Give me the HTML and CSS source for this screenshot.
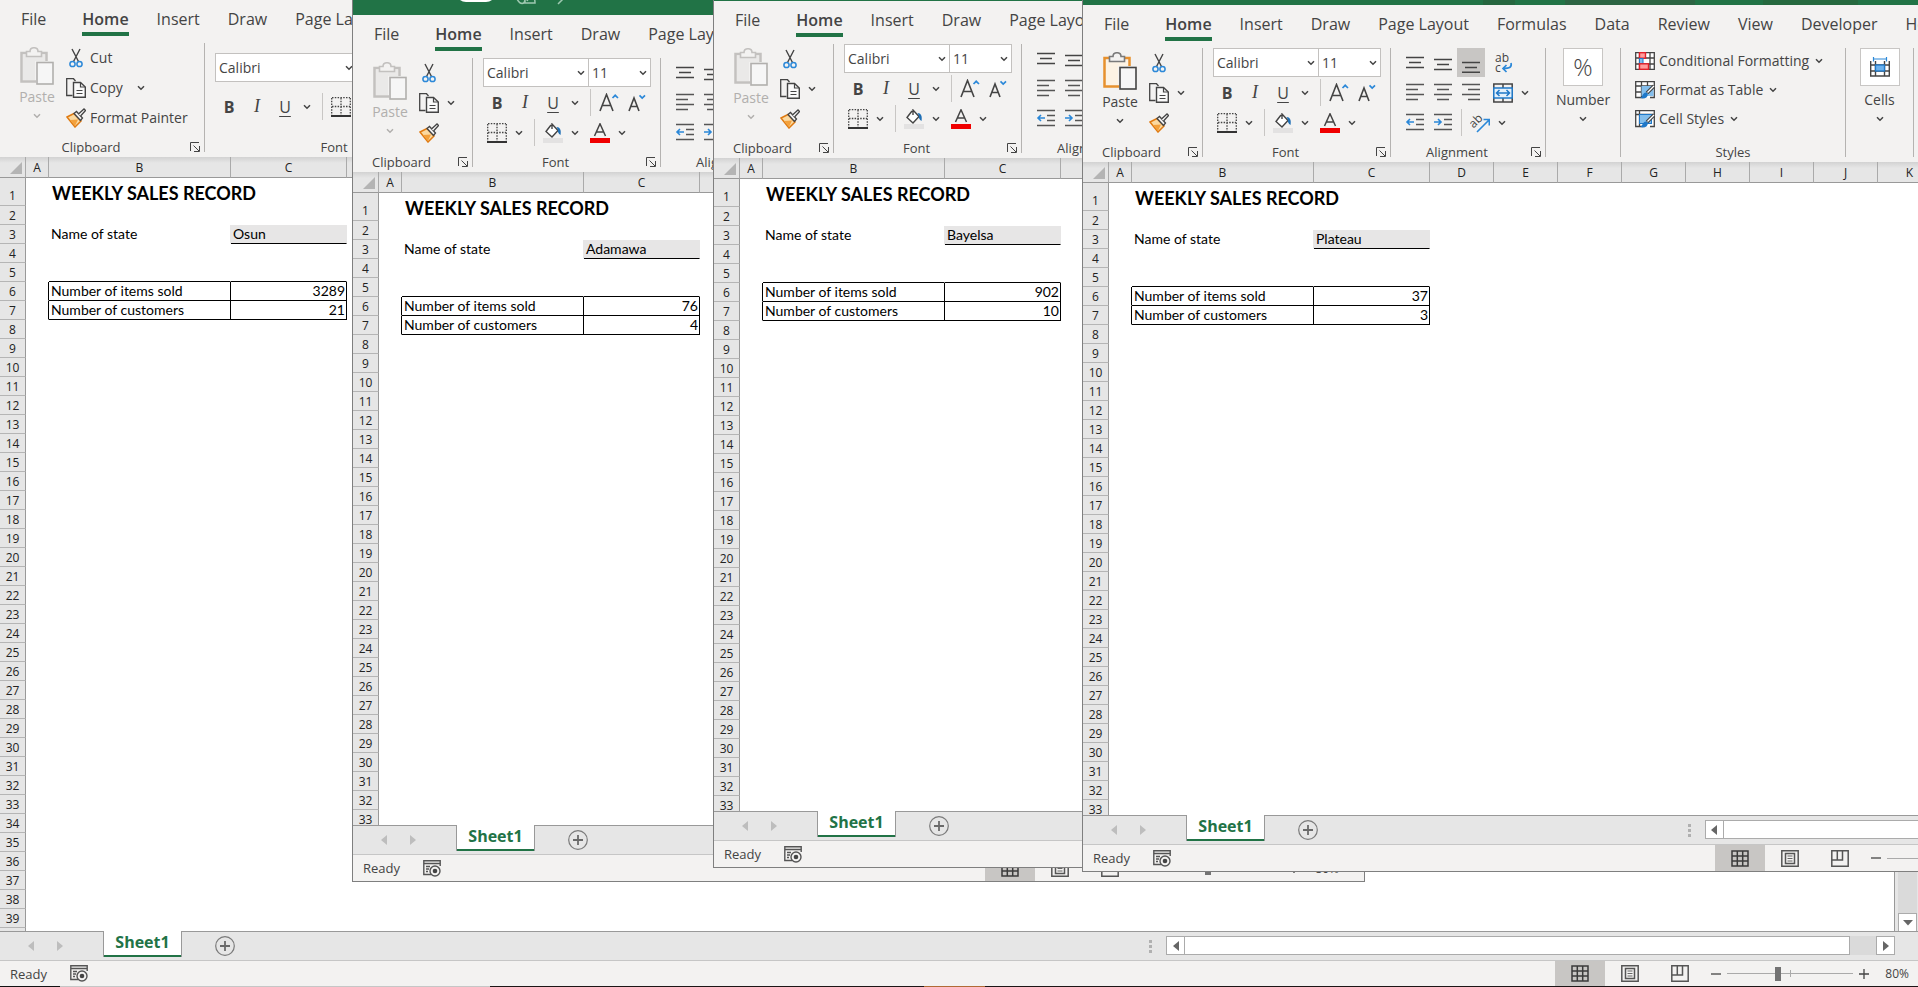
FILE: index.html
```html
<!DOCTYPE html>
<html lang="en">
<head>
    <meta charset="UTF-8">
    <title>Weekly sales record</title>
    <link rel="stylesheet" href="styles.css">
</head>
<body>
    <!-- icon set -->
    <svg class="sprite" aria-hidden="true">
        <symbol id="i-chevron" viewBox="0 0 8 6"><path d="M1 1.2L4 4.2L7 1.2" fill="none" stroke="currentColor" stroke-width="1.5"/></symbol>
        <symbol id="i-launcher" viewBox="0 0 10 10"><path d="M.5 9V.5H9M3.5 3.5L9 9M9.5 4V9.5H4" fill="none" stroke="currentColor"/></symbol>
        <symbol id="i-paste" viewBox="0 0 34 38">
            <path d="M8 6H1.500V34.500H16M20 6H26.500V14" fill="none" class="board"/>
            <path d="M3 8H25V14H15V33H3Z" class="board-page"/>
            <path d="M6.500 9.500V4.500H10C10 -.5 18 -.5 18 4.500H21.500V9.500Z" class="board-clip"/>
            <rect x="17" y="15.500" width="16" height="21.500" class="board-sheet"/>
        </symbol>
        <symbol id="i-cut" viewBox="0 0 20 20">
            <path d="M6 1L12.500 13.500M14 1L7.500 13.500" fill="none" stroke="#444" stroke-width="1.400"/>
            <circle cx="6.500" cy="16" r="2.600" fill="none" stroke="#2b88d8" stroke-width="1.500"/>
            <circle cx="13.500" cy="16" r="2.600" fill="none" stroke="#2b88d8" stroke-width="1.500"/>
        </symbol>
        <symbol id="i-copy" viewBox="0 0 20 20">
            <path d="M6.500 17.500H.7V.7H7.500L9.500 3" fill="none" stroke="#444" stroke-width="1.300"/>
            <path d="M7.500 4.500H14.500L19.300 9V19.300H7.500Z" fill="#fafafa" stroke="#444" stroke-width="1.400"/>
            <path d="M14.500 4.500V9H19M10.500 12.500H16.500M10.500 15.500H16.500" fill="none" stroke="#444" stroke-width="1.200"/>
        </symbol>
        <symbol id="i-painter" viewBox="0 0 20 20">
            <path d="M1 9L8 5.500L15 13L9 19Z" fill="#fbd9a0" stroke="#e07b12" stroke-width="1.500"/>
            <path d="M4 12L12 11.500L9 18Z" fill="#f3a13c"/>
            <path d="M8 5.500L10.500 3.500L16.500 10L14.500 12.500Z" fill="#f3f2f1" stroke="#444" stroke-width="1.300"/>
            <path d="M12.500 6L18 1L19.500 2.500L14.500 8" fill="#fff" stroke="#444" stroke-width="1.300"/>
        </symbol>
        <symbol id="i-borders" viewBox="0 0 20 20">
            <path d="M1 .7H19M.7 1V18M19.300 1V18M10 1V18M1 9.500H19" stroke="#444" stroke-width="1.300" stroke-dasharray="1.500 1.300" fill="none"/>
            <path d="M0 19H20" stroke="#333" stroke-width="2"/>
        </symbol>
        <symbol id="i-fill" viewBox="0 0 20 20">
            <path d="M8 2L3 8.500L9 14L15 7.500L9 1V6" fill="#fff" stroke="#444" stroke-width="1.400"/>
            <path d="M13.500 4C17 4 18.500 7 17.500 12C15.500 11 14.500 8.500 15 7Z" fill="#1f6fb5"/>
            <path d="M0 17.500H20" stroke="#e3e2e2" stroke-width="5"/>
        </symbol>
        <symbol id="i-fontcolor" viewBox="0 0 20 20">
            <path d="M4.500 13L10 .8L15.500 13M6.500 9H13.500" fill="none" stroke="#444" stroke-width="1.500"/>
            <path d="M0 17.500H20" stroke="#f00000" stroke-width="5"/>
        </symbol>
        <symbol id="i-grow" viewBox="0 0 20 20">
            <path d="M1 18L7.500 1.500L14 18M3.500 12.500H11.500" fill="none" stroke="#444" stroke-width="1.600"/>
            <path d="M13.500 5L16.200 2.300L19 5" fill="none" stroke="#2b88d8" stroke-width="1.700"/>
        </symbol>
        <symbol id="i-shrink" viewBox="0 0 20 20">
            <path d="M2 18L7 5L12 18M4 13.500H10" fill="none" stroke="#444" stroke-width="1.600"/>
            <path d="M12.500 2.300L15.200 5L18 2.300" fill="none" stroke="#2b88d8" stroke-width="1.700"/>
        </symbol>
        <symbol id="i-top" viewBox="0 0 20 20"><path d="M1 4.500H19M4 9.500H16M1 14.500H19" stroke="#444" stroke-width="1.400"/></symbol>
        <symbol id="i-middle" viewBox="0 0 20 20"><path d="M1 6.500H19M4 11.500H16M1 16.500H19" stroke="#444" stroke-width="1.400"/></symbol>
        <symbol id="i-bottom" viewBox="0 0 20 20"><path d="M1 9.500H19M4 14.500H16M1 19.300H19" stroke="#444" stroke-width="1.400"/></symbol>
        <symbol id="i-left" viewBox="0 0 20 20"><path d="M1 1.500H19M1 6.500H13M1 11.500H19M1 16.500H13" stroke="#555" stroke-width="1.400"/></symbol>
        <symbol id="i-center" viewBox="0 0 20 20"><path d="M1 1.500H19M4 6.500H16M1 11.500H19M4 16.500H16" stroke="#555" stroke-width="1.400"/></symbol>
        <symbol id="i-right" viewBox="0 0 20 20"><path d="M1 1.500H19M7 6.500H19M1 11.500H19M7 16.500H19" stroke="#555" stroke-width="1.400"/></symbol>
        <symbol id="i-outdent" viewBox="0 0 20 20">
            <path d="M1 1.500H19M11 6.500H19M11 11.500H19M1 16.500H19" stroke="#555" stroke-width="1.400"/>
            <path d="M9 9H2M5 6L2 9L5 12" fill="none" stroke="#2b88d8" stroke-width="1.600"/>
        </symbol>
        <symbol id="i-indent" viewBox="0 0 20 20">
            <path d="M1 1.500H19M11 6.500H19M11 11.500H19M1 16.500H19" stroke="#555" stroke-width="1.400"/>
            <path d="M1 9H8M5 6L8 9L5 12" fill="none" stroke="#2b88d8" stroke-width="1.600"/>
        </symbol>
        <symbol id="i-wrap" viewBox="0 0 20 20">
            <text x="2" y="9" class="icon-text">ab</text>
            <text x="2" y="19" class="icon-text">c</text>
            <path d="M18 10C19 14 17 15.500 10 15.500M13.500 12L10 15.500L13.500 19" fill="none" stroke="#2b88d8" stroke-width="1.700"/>
        </symbol>
        <symbol id="i-merge" viewBox="0 0 20 20">
            <path d="M.8 1H19.200V19H.8ZM10 1V5M10 15V19" fill="none" stroke="#444" stroke-width="1.500"/>
            <rect x=".8" y="5" width="18.400" height="10" fill="#e5f1fb" stroke="#1f78c8" stroke-width="1.500"/>
            <path d="M3.500 10H16.500M6.500 7L3.500 10L6.500 13M13.500 7L16.500 10L13.500 13" fill="none" stroke="#1f78c8" stroke-width="1.500"/>
        </symbol>
        <symbol id="i-orient" viewBox="0 0 20 20">
            <text x="0" y="13" class="icon-text" transform="rotate(-45 5 10)">ab</text>
            <path d="M7 19L19 7M13.500 6.500H19.300V12.500" fill="none" stroke="#2b88d8" stroke-width="1.600"/>
        </symbol>
        <symbol id="i-cond" viewBox="0 0 20 18">
            <path d="M.7.7H19.300V17.300H.7ZM1 6H19M1 12H19M4.500 1V17M15 1V17" fill="#fff" stroke="#444" stroke-width="1.300"/>
            <rect x="4.500" y=".7" width="6" height="5.500" fill="#ff9d9d" stroke="#e0202a" stroke-width="1.400"/>
            <rect x="4.500" y="6.500" width="3.500" height="5" fill="#83beec" stroke="#1f78c8"/>
            <rect x="4.500" y="11.800" width="9" height="5.500" fill="#ff9d9d" stroke="#e0202a" stroke-width="1.400"/>
        </symbol>
        <symbol id="i-table" viewBox="0 0 20 18">
            <path d="M8 16.500H.7V.7H19.300V16.500H15M1 5H19M1 11H7M6.500 1V16M12.500 1V5" fill="#fff" stroke="#444" stroke-width="1.300"/>
            <rect x="6.500" y="5" width="12" height="10" fill="#83beec"/>
            <path d="M19 5L12 12" stroke="#444" stroke-width="3.500"/>
            <path d="M19 5L12.500 11.500" stroke="#fff" stroke-width="1.300"/>
            <path d="M5 17C8 16 7 12 11 11.500C14 12 13 17 9 17.500Z" fill="#1f78c8"/>
        </symbol>
        <symbol id="i-cellstyle" viewBox="0 0 20 18">
            <path d="M8 16.500H.7V.7H19.300V16.500H15M1 4.500H19M4.500 1V16" fill="#fff" stroke="#444" stroke-width="1.300"/>
            <rect x="4.500" y="4.500" width="12" height="9" fill="#83beec" stroke="#1f78c8"/>
            <path d="M19 5L12 12" stroke="#444" stroke-width="3.500"/>
            <path d="M19 5L12.500 11.500" stroke="#fff" stroke-width="1.300"/>
            <path d="M5 17C8 16 7 12 11 11.500C14 12 13 17 9 17.500Z" fill="#1f78c8"/>
        </symbol>
        <symbol id="i-cells" viewBox="0 0 20 20">
            <path d="M.7 4V19H19.300V4M1 8H19M1 14H19M5.500 4V19M14.500 4V19" fill="none" stroke="#444" stroke-width="1.400"/>
            <rect x="5.500" y="8" width="9" height="6" fill="#6cb2ee" stroke="#1f78c8" stroke-width="1.300"/>
            <path d="M3.500 0V4.500M16.500 0V4.500M3.500 2H16.500" stroke="#2b88d8" stroke-width="1.200"/>
        </symbol>
        <symbol id="i-macro" viewBox="0 0 18 17">
            <path d="M8 14.500H.8V.8H17.200V6M1 3.500H17M3 6.500H7M3 9H6M3 11.500H5" fill="none" stroke="#555" stroke-width="1.400"/>
            <circle cx="12" cy="11" r="5" fill="#f3f2f1" stroke="#555" stroke-width="1.400"/>
            <circle cx="12" cy="11" r="2.300" fill="#444"/>
        </symbol>
        <symbol id="i-plus-circle" viewBox="0 0 20 20">
            <circle cx="10" cy="10" r="9.300" fill="none" stroke="#7a7a7a" stroke-width="1.200"/>
            <path d="M5 10H15M10 5V15" stroke="#6a6a6a" stroke-width="1.800"/>
        </symbol>
        <symbol id="i-normal" viewBox="0 0 18 17"><path d="M1 1H17V16H1ZM1 6H17M1 11H17M6.300 1V16M11.700 1V16" fill="none" stroke="#3b3b3b" stroke-width="1.500"/></symbol>
        <symbol id="i-pagelayout" viewBox="0 0 18 17">
            <path d="M.8.8H17.200V16.200H.8ZM4.500 3.500H13.500V13.500H4.500Z" fill="none" stroke="#555" stroke-width="1.500"/>
            <path d="M6.500 6H11.500M6.500 8.500H11.500M6.500 11H11.500" stroke="#666"/>
        </symbol>
        <symbol id="i-pagebreak" viewBox="0 0 18 17"><path d="M.8.8H17.200V16.200H.8ZM1 10H11.500V1M6.300 1V10" fill="none" stroke="#555" stroke-width="1.500"/></symbol>
    </svg>

    <main class="desktop" id="desktop"></main>
    <div class="taskbar"></div>

    <template id="window-template">
        <section class="window">
            <header class="titlebar">
                <span class="autosave"></span>
                <svg class="title-icon" viewBox="0 0 20 20"><path d="M1 14C4 20 9 20 9 14V18H19C19 10 14 10 11 16" fill="none" stroke="#9fc9b1" stroke-width="1.500"/></svg>
                <svg class="title-icon" viewBox="0 0 20 20"><path d="M2 19L9 12" fill="none" stroke="#9fc9b1" stroke-width="1.500"/></svg>
            </header>
            <nav class="tabs">
                <button class="tab file">File</button>
                <button class="tab active">Home</button>
                <button class="tab">Insert</button>
                <button class="tab">Draw</button>
                <button class="tab">Page Layout</button>
                <button class="tab">Formulas</button>
                <button class="tab">Data</button>
                <button class="tab">Review</button>
                <button class="tab">View</button>
                <button class="tab">Developer</button>
                <button class="tab">Help</button>
            </nav>
            <div class="ribbon">
                <div class="group clipboard">
                    <div class="group-body">
                        <button class="big paste">
                            <svg class="icon-paste"><use href="#i-paste"/></svg>
                            <span>Paste</span>
                            <svg class="chevron"><use href="#i-chevron"/></svg>
                        </button>
                        <div class="rows">
                            <button class="command" aria-label="Cut"><svg class="icon"><use href="#i-cut"/></svg><span class="wide">Cut</span></button>
                            <button class="command" aria-label="Copy"><svg class="icon"><use href="#i-copy"/></svg><span class="wide">Copy</span><svg class="chevron"><use href="#i-chevron"/></svg></button>
                            <button class="command" aria-label="Format Painter"><svg class="icon"><use href="#i-painter"/></svg><span class="wide">Format Painter</span></button>
                        </div>
                    </div>
                    <div class="group-label"><span>Clipboard</span><button class="launcher" aria-label="Clipboard settings"><svg><use href="#i-launcher"/></svg></button></div>
                </div>
                <div class="group font">
                    <div class="group-body">
                        <div class="row selects">
                            <label class="combo font-name"><select aria-label="Font"><option>Calibri</option></select><svg class="chevron"><use href="#i-chevron"/></svg></label>
                            <label class="combo font-size"><select aria-label="Font size"><option>11</option></select><svg class="chevron"><use href="#i-chevron"/></svg></label>
                        </div>
                        <div class="row">
                            <button class="tool"><b>B</b></button>
                            <button class="tool italic">I</button>
                            <button class="tool underline">U</button>
                            <button class="drop" aria-label="Underline style"><svg class="chevron"><use href="#i-chevron"/></svg></button>
                            <i class="sep"></i>
                            <button class="tool grow" aria-label="Increase font size"><svg class="icon"><use href="#i-grow"/></svg></button>
                            <button class="tool grow" aria-label="Decrease font size"><svg class="icon"><use href="#i-shrink"/></svg></button>
                        </div>
                        <div class="row">
                            <button class="tool" aria-label="Borders"><svg class="icon"><use href="#i-borders"/></svg></button>
                            <button class="drop" aria-label="Border style"><svg class="chevron"><use href="#i-chevron"/></svg></button>
                            <i class="sep"></i>
                            <button class="tool" aria-label="Fill color"><svg class="icon"><use href="#i-fill"/></svg></button>
                            <button class="drop" aria-label="Choose fill color"><svg class="chevron"><use href="#i-chevron"/></svg></button>
                            <button class="tool font-color" aria-label="Font color"><svg class="icon"><use href="#i-fontcolor"/></svg></button>
                            <button class="drop" aria-label="Choose font color"><svg class="chevron"><use href="#i-chevron"/></svg></button>
                        </div>
                    </div>
                    <div class="group-label"><span>Font</span><button class="launcher" aria-label="Font settings"><svg><use href="#i-launcher"/></svg></button></div>
                </div>
                <div class="group alignment">
                    <div class="group-body">
                        <div class="row">
                            <button class="tool" aria-label="Top align"><svg class="icon"><use href="#i-top"/></svg></button>
                            <button class="tool" aria-label="Middle align"><svg class="icon"><use href="#i-middle"/></svg></button>
                            <button class="tool on" aria-label="Bottom align"><svg class="icon"><use href="#i-bottom"/></svg></button>
                            <button class="tool after" aria-label="Wrap text"><svg class="icon"><use href="#i-wrap"/></svg></button>
                        </div>
                        <div class="row">
                            <button class="tool" aria-label="Align left"><svg class="icon"><use href="#i-left"/></svg></button>
                            <button class="tool" aria-label="Center"><svg class="icon"><use href="#i-center"/></svg></button>
                            <button class="tool" aria-label="Align right"><svg class="icon"><use href="#i-right"/></svg></button>
                            <button class="tool after" aria-label="Merge and center"><svg class="icon"><use href="#i-merge"/></svg></button>
                            <button class="drop" aria-label="Merge options"><svg class="chevron"><use href="#i-chevron"/></svg></button>
                        </div>
                        <div class="row">
                            <button class="tool" aria-label="Decrease indent"><svg class="icon"><use href="#i-outdent"/></svg></button>
                            <button class="tool" aria-label="Increase indent"><svg class="icon"><use href="#i-indent"/></svg></button>
                            <i class="sep tight"></i>
                            <button class="tool" aria-label="Orientation"><svg class="icon"><use href="#i-orient"/></svg></button>
                            <button class="drop" aria-label="Orientation options"><svg class="chevron"><use href="#i-chevron"/></svg></button>
                        </div>
                    </div>
                    <div class="group-label"><span>Alignment</span><button class="launcher" aria-label="Alignment settings"><svg><use href="#i-launcher"/></svg></button></div>
                </div>
                <div class="group number">
                    <button class="big"><span class="tile">%</span><span>Number</span><svg class="chevron"><use href="#i-chevron"/></svg></button>
                </div>
                <div class="group styles">
                    <div class="group-body">
                        <button class="command"><svg class="icon"><use href="#i-cond"/></svg><span>Conditional Formatting</span><svg class="chevron"><use href="#i-chevron"/></svg></button>
                        <button class="command"><svg class="icon"><use href="#i-table"/></svg><span>Format as Table</span><svg class="chevron"><use href="#i-chevron"/></svg></button>
                        <button class="command"><svg class="icon"><use href="#i-cellstyle"/></svg><span>Cell Styles</span><svg class="chevron"><use href="#i-chevron"/></svg></button>
                    </div>
                    <div class="group-label"><span>Styles</span></div>
                </div>
                <div class="group cells">
                    <button class="big"><span class="tile"><svg class="icon"><use href="#i-cells"/></svg></span><span>Cells</span><svg class="chevron"><use href="#i-chevron"/></svg></button>
                </div>
            </div>
            <div class="workarea">
                <div class="sheet"><table><thead></thead><tbody></tbody></table></div>
                <div class="vscroll"><div class="track"></div><button class="scroll-btn" aria-label="Scroll down"><svg viewBox="0 0 10 6"><path d="M0 0H10L5 5.500Z" fill="#666"/></svg></button></div>
            </div>
            <div class="sheetbar">
                <div class="sheet-tabs">
                    <button class="nav-arrow" aria-label="Previous sheet"><svg viewBox="0 0 6 10"><path d="M6 0V10L0 5Z" fill="#bdbdbd"/></svg></button>
                    <button class="nav-arrow" aria-label="Next sheet"><svg viewBox="0 0 6 10"><path d="M0 0V10L6 5Z" fill="#bdbdbd"/></svg></button>
                    <button class="sheet-tab">Sheet1</button>
                    <button class="add" aria-label="New sheet"><svg><use href="#i-plus-circle"/></svg></button>
                    <svg class="dots" viewBox="0 0 3 13"><path d="M0 0H3V3H0ZM0 5H3V8H0ZM0 10H3V13H0Z" fill="#b0b0b0"/></svg>
                </div>
                <div class="hscroll">
                    <button class="scroll-btn" aria-label="Scroll left"><svg viewBox="0 0 6 10"><path d="M6 0V10L0 5Z" fill="#666"/></svg></button>
                    <div class="thumb"></div>
                    <div class="gap"></div>
                    <button class="scroll-btn" aria-label="Scroll right"><svg viewBox="0 0 6 10"><path d="M0 0V10L6 5Z" fill="#666"/></svg></button>
                </div>
            </div>
            <footer class="status">
                <span class="ready">Ready</span>
                <svg class="macro"><use href="#i-macro"/></svg>
                <div class="views">
                    <button class="view on" aria-label="Normal"><svg><use href="#i-normal"/></svg></button>
                    <button class="view" aria-label="Page layout"><svg><use href="#i-pagelayout"/></svg></button>
                    <button class="view" aria-label="Page break preview"><svg><use href="#i-pagebreak"/></svg></button>
                </div>
                <button class="zoom-btn" aria-label="Zoom out"><svg viewBox="0 0 10 10"><path d="M0 5H10" stroke="#444" stroke-width="1.300"/></svg></button>
                <input class="zoom" type="range" min="0" max="200" value="80" aria-label="Zoom">
                <button class="zoom-btn" aria-label="Zoom in"><svg viewBox="0 0 10 10"><path d="M0 5H10M5 0V10" stroke="#444" stroke-width="1.300"/></svg></button>
                <span class="percent">80%</span>
            </footer>
        </section>
    </template>

    <script src="script.js"></script>
</body>
</html>
```

FILE: styles.css
```css
* {
    box-sizing: border-box;
}

body {
    margin: 0;
    height: 100vh;
    display: flex;
    flex-direction: column;
    overflow: hidden;
    font-family: "Open Sans", "Noto Sans", sans-serif;
    font-size: 14px;
    color: #444;
}

button {
    border: 0;
    padding: 0;
    background: none;
    font: inherit;
    color: inherit;
    display: flex;
    align-items: center;
    justify-content: center;
    white-space: nowrap;
}

svg {
    display: block;
    flex: none;
}

.sprite {
    position: absolute;
    width: 0;
    height: 0;
}

.desktop {
    position: relative;
    flex: 1;
    overflow: hidden;
}

.taskbar {
    height: 1px;
    background: linear-gradient(to right, #111 60px, #c6c6c6 60px 490px, #1c1516 490px 924px, #b06a35 924px 985px, #1c1516 985px);
}

/* windows */
.window {
    position: absolute;
    display: flex;
    flex-direction: column;
    width: 1013px;
    height: calc(100vh - 80px);
    border: 1px solid #7f7f7f;
    border-top: 0;
    background: #e6e6e6;
    overflow: hidden;
}

.osun {
    left: 0;
    top: -40px;
    width: 100%;
    height: calc(100vh + 39px);
    border: 0;
}

.adamawa { left: 352px; top: -25px; }
.bayelsa { left: 713px; top: -39px; }
.plateau { left: 1082px; top: -35px; }

.titlebar {
    flex: none;
    height: 40px;
    background: #217346;
    display: flex;
    align-items: flex-start;
    gap: 20px;
    padding: 7px 0 0 103px;
}

.plateau .titlebar {
    background: linear-gradient(to right, #217346 400px, #26663f 400px 432px, #217346 432px 482px, #2c6443 482px 612px, #217346 612px 680px, #26693f 680px 775px, #217346 775px);
}

.autosave {
    width: 40px;
    height: 20px;
    border-radius: 10px;
    background: #fff;
}

.title-icon {
    width: 20px;
    height: 20px;
    margin-top: 3px;
}

.plateau .autosave,
.plateau .title-icon {
    visibility: hidden;
}

/* tabs */
.tabs {
    flex: none;
    display: flex;
    height: 43px;
    padding: 0 7px;
    background: #f3f2f1;
    font-size: 16px;
    overflow: hidden;
}

.tab {
    height: 36px;
    padding: 1px 14px 0;
    flex: none;
}

.tab.file {
    margin-right: 8px;
}

.tab.active {
    font-weight: 600;
    background: linear-gradient(#217346, #217346) center bottom / calc(100% - 28px) 4px no-repeat;
}

/* ribbon */
.ribbon {
    flex: none;
    display: flex;
    height: 114px;
    padding-bottom: 5px;
    background: #f3f2f1;
    overflow: hidden;
}

.group {
    flex: none;
    display: flex;
    flex-direction: column;
    border-right: 1px solid #b5b3b1;
}

.clipboard { width: 120px; }
.font { width: 188px; }
.alignment { width: 155px; }
.number { width: 75px; align-items: center; }
.styles { width: 225px; }
.cells { width: 68px; align-items: center; }

.group-body {
    flex: 1;
    display: flex;
    flex-direction: column;
    gap: 1px;
    padding-left: 10px;
}

.group-label {
    display: flex;
    align-items: center;
    height: 18px;
    margin-bottom: -4px;
    line-height: 18px;
    font-size: 13px;
}

.group-label span {
    flex: 1;
    text-align: center;
}

.launcher {
    width: 22px;
    height: 18px;
    justify-content: flex-start;
    padding-left: 8px;
}

.launcher svg {
    width: 10px;
    height: 10px;
}

.icon {
    width: 20px;
    height: 20px;
}

.icon-text {
    font-size: 12px;
    fill: #444;
}

.chevron {
    width: 8px;
    height: 6px;
}

.clipboard .group-body {
    flex-direction: row;
    padding-left: 19px;
}

.big {
    flex-direction: column;
    justify-content: flex-start;
    line-height: 20px;
}

.big .chevron {
    margin-top: 6px;
}

.paste {
    width: 36px;
    padding-top: 4px;
    margin-right: 10px;
    --board: #e8912d;
    --page: #fdf3e4;
    --clip: #7a7a7a;
    --sheet: #444;
}

.osun .paste,
.adamawa .paste,
.bayelsa .paste {
    color: #b1afad;
    --board: #c3c1bf;
    --page: #eae9e8;
    --clip: #c3c1bf;
    --sheet: #b1afad;
}

.icon-paste {
    width: 34px;
    height: 38px;
    margin-bottom: 2px;
}

.board { stroke: var(--board); stroke-width: 2.5; }
.board-page { fill: var(--page); }
.board-clip { fill: #f3f2f1; stroke: var(--clip); stroke-width: 1.6; }
.board-sheet { fill: #f6f6f6; stroke: var(--sheet); stroke-width: 1.6; }

.rows {
    display: flex;
    flex-direction: column;
    gap: 1px;
}

.command {
    height: 29px;
    justify-content: flex-start;
    gap: 4px;
}

.rows .chevron {
    margin-left: 4px;
}

.command .wide {
    display: none;
}

.osun .wide {
    display: inline;
}

.osun .clipboard { width: 205px; }
.osun .font { width: 281px; }
.osun .font-name { width: 142px; }
.osun .rows .chevron { margin-left: 10px; }

.row {
    display: flex;
    align-items: center;
    height: 29px;
}

/* the maximized window has room for one long row of font tools */
.osun .font .group-body {
    flex-flow: row wrap;
    align-content: flex-start;
    padding-top: 10px;
    row-gap: 10px;
    column-gap: 0;
    margin-right: -80px;
}

.osun .font .selects {
    width: 100%;
}

.osun .font .row .grow {
    display: none;
}

.tool {
    width: 28px;
    height: 29px;
    font-size: 16px;
}

.tool.italic {
    font-family: "Liberation Serif", serif;
    font-style: italic;
    font-size: 18px;
}

.tool.underline {
    text-decoration: underline;
    text-underline-offset: 3px;
}

.tool.on,
.view.on {
    background: #c8c6c4;
}

.tool.after {
    margin-left: 4px;
}

.tool.font-color {
    margin-left: 3px;
}

.drop {
    width: 16px;
    height: 29px;
}

.sep {
    width: 1px;
    height: 27px;
    margin: 0 4px 0 7px;
    background: #c8c6c4;
}

.sep.tight {
    margin-left: 4px;
}

.combo {
    display: grid;
    align-items: center;
    height: 29px;
    border: 1px solid #c3c1bf;
    background: #fff;
}

.combo select,
.combo .chevron {
    grid-area: 1 / 1;
}

.combo .chevron {
    justify-self: end;
    margin-right: 3px;
    pointer-events: none;
}

.combo select {
    appearance: none;
    border: 0;
    padding: 0 3px;
    background: none;
    font: inherit;
    color: inherit;
}

.font-name { width: 106px; }
.font-size { width: 62px; border-left: 0; }

.tile {
    display: flex;
    align-items: center;
    justify-content: center;
    width: 40px;
    height: 38px;
    margin-bottom: 4px;
    border: 1px solid #c8c6c4;
    background: #fff;
    font-size: 24px;
    font-weight: 300;
}

.styles .group-body {
    padding-left: 14px;
    gap: 0;
}

.styles .command {
    height: 29px;
    padding-bottom: 4px;
}

.styles .icon {
    height: 18px;
}

.styles .chevron {
    margin-left: 2px;
}

/* sheet */
.workarea {
    flex: 1;
    min-height: 0;
    display: flex;
}

.sheet {
    flex: 1;
    min-width: 0;
    overflow: hidden;
    background: #fff;
    border-right: 1px solid #999;
    font-family: Lato, sans-serif;
    color: #000;
}

table {
    table-layout: fixed;
    width: 0;
    border-spacing: 0;
    font-size: 14px;
    line-height: 17px;
}

th {
    padding: 0;
    background: #e6e6e6;
    font-family: "Open Sans", sans-serif;
    font-weight: 400;
    font-size: 12px;
    color: #222;
}

thead th {
    width: 64px;
    height: 21px;
    border-right: 1px solid #aaa;
    border-bottom: 1px solid #999;
    background: linear-gradient(#d2d2d2, #e6e6e6 6px);
}

thead .corner {
    width: 26px;
}

.corner svg {
    width: 12px;
    height: 12px;
    margin: 2px 0 0 10px;
}

.col-a { width: 23px; }
.col-b { width: 182px; }
.col-c { width: 116px; }

tbody th {
    height: 19px;
    border-right: 1px solid #999;
    border-bottom: 1px solid #b5b5b5;
}

td {
    height: 19px;
    padding: 0 2px 1px;
    border-right: 1px solid transparent;
    border-bottom: 1px solid transparent;
    line-height: 16px;
    white-space: nowrap;
}

tr.first th {
    height: 28px;
    padding-top: 8px;
}

tr.first td {
    padding: 3px 3px 0;
    font-size: 18px;
    font-weight: 700;
    line-height: 24px;
}

.line-right { border-right-color: #000; }
.line-bottom { border-bottom-color: #000; }
.amount { text-align: right; padding-right: 1px; }
.state { background: #e7e6e6; }
.before-state { border-right-color: #e7e6e6; }

.vscroll {
    width: 23px;
    display: flex;
    flex-direction: column;
    padding: 0 1px 0 3px;
}

.vscroll .scroll-btn {
    margin-bottom: -1px;
}

.track {
    flex: 1;
    background: #dadada;
}

.scroll-btn {
    flex: none;
    width: 19px;
    height: 19px;
    border: 1px solid #ababab;
    background: #fff;
}

.hscroll .scroll-btn svg {
    width: 6px;
    height: 10px;
}

.vscroll svg {
    width: 10px;
    height: 6px;
}

.sheetbar {
    flex: none;
    display: flex;
    height: 29px;
    border-top: 1px solid #999;
    padding-right: 23px;
}

.sheet-tabs {
    flex: none;
    width: 61.5%;
    display: flex;
    align-items: flex-start;
    padding-left: 16px;
}

.osun .sheet-tabs {
    width: 60.8%;
}

.nav-arrow {
    width: 29px;
    height: 28px;
}

.nav-arrow svg {
    width: 6px;
    height: 10px;
}

.sheet-tab {
    width: 79px;
    height: 26px;
    margin: -1px 33px 0 29px;
    padding-bottom: 4px;
    border: 1px solid #999;
    border-width: 0 1px;
    background: linear-gradient(#217346, #217346) bottom / 100% 2px no-repeat #fff;
    color: #217346;
    font-size: 16px;
    font-weight: 700;
}

.add {
    height: 28px;
}

.add svg {
    width: 20px;
    height: 20px;
}

.dots {
    width: 3px;
    height: 13px;
    margin: 8px 0 0 auto;
}

.hscroll {
    flex: 1;
    display: flex;
    padding: 4px 0 0 14px;
}

.thumb {
    flex: 1;
    height: 19px;
    margin-left: -1px;
    border: 1px solid #ababab;
    background: #fff;
}

.gap {
    width: 26px;
    height: 19px;
    background: #dadada;
}

/* status bar */
.status {
    flex: none;
    display: flex;
    align-items: center;
    height: 27px;
    padding: 0 25px 0 10px;
    border-top: 1px solid #c6c6c6;
    background: #f3f2f1;
    font-size: 12px;
}

.osun .status {
    height: 26px;
    padding-right: 9px;
}

.ready {
    width: 60px;
    font-size: 13px;
}

.macro {
    width: 18px;
    height: 17px;
}

.views {
    display: flex;
    height: 100%;
    margin-left: auto;
    margin-right: 6px;
}

.view {
    width: 50px;
    height: 100%;
}

.view svg {
    width: 18px;
    height: 17px;
}

.zoom-btn svg {
    width: 10px;
    height: 10px;
}

.zoom {
    appearance: none;
    width: 126px;
    height: 16px;
    margin: 0 6px;
    background:
        linear-gradient(#aaa, #aaa) center / 1px 7px no-repeat,
        linear-gradient(#aaa, #aaa) center / 100% 1px no-repeat;
}

.zoom::-webkit-slider-thumb {
    appearance: none;
    width: 6px;
    height: 14px;
    background: #737373;
}

.percent {
    width: 40px;
    text-align: right;
}
```

FILE: script.js
```js
const workbooks = [
    { state: 'Osun', items: 3289, customers: 21, rows: 40, cols: 27 },
    { state: 'Adamawa', items: 76, customers: 4, rows: 33, cols: 13 },
    { state: 'Bayelsa', items: 902, customers: 10, rows: 33, cols: 13 },
    { state: 'Plateau', items: 37, customers: 3, rows: 33, cols: 13 }
];

// column index -> spreadsheet letter (A..Z, AA..)
function letter(i) {
    return i < 26 ? String.fromCharCode(65 + i) : 'A' + letter(i - 26);
}

function headRow(cols) {
    let html = '<th class="corner"><svg viewBox="0 0 12 12"><path d="M12 0V12H0Z" fill="#b4b4b4"/></svg></th>';
    for (let i = 0; i < cols; i++) {
        const l = letter(i);
        html += `<th class="${i < 3 ? 'col-' + l.toLowerCase() : ''}">${l}</th>`;
    }
    return `<tr>${html}</tr>`;
}

// only columns A to C hold anything
function bodyRow(n, book) {
    let cells = '<td></td><td></td><td></td>';
    if (n === 1) cells = '<td></td><td>WEEKLY SALES RECORD</td><td></td>';
    if (n === 3) cells = `<td></td><td class="before-state">Name of state</td><td class="state line-bottom">${book.state}</td>`;
    if (n === 5) cells = '<td></td><td class="line-bottom"></td><td class="line-bottom"></td>';
    if (n === 6) cells = boxed('Number of items sold', book.items);
    if (n === 7) cells = boxed('Number of customers', book.customers);
    return `<tr class="${n === 1 ? 'first' : ''}"><th>${n}</th>${cells}</tr>`;
}

function boxed(label, value) {
    return `<td class="line-right"></td><td class="line-right line-bottom">${label}</td>` +
        `<td class="line-right line-bottom amount">${value}</td>`;
}

const template = document.getElementById('window-template');
const desktop = document.getElementById('desktop');

for (const book of workbooks) {
    const win = template.content.cloneNode(true);
    win.querySelector('.window').classList.add(book.state.toLowerCase());
    win.querySelector('thead').innerHTML = headRow(book.cols);
    let body = '';
    for (let n = 1; n <= book.rows; n++) body += bodyRow(n, book);
    win.querySelector('tbody').innerHTML = body;
    desktop.appendChild(win);
}
```
